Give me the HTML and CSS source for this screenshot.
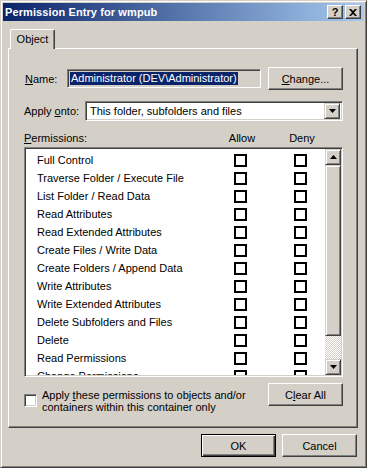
FILE: index.html
```html
<!DOCTYPE html>
<html lang="en">
<head>
    <meta charset="UTF-8">
    <title>Permission Entry for wmpub</title>
    <link rel="stylesheet" href="styles.css">
</head>
<body>
    <div class="window">
        <div class="titlebar">
            <span class="title">Permission Entry for wmpub</span>
            <div class="caption-buttons">
                <div class="cap-btn help">?</div>
                <div class="cap-btn">
                    <svg width="8" height="7" viewBox="0 0 8 7"><path d="M0 0h2l2 2 2-2h2L5 3.5 8 7H6L4 5 2 7H0l3-3.5z" fill="#000"/></svg>
                </div>
            </div>
        </div>

        <div class="client">
            <div class="tabs">
                <div class="tab active">Object</div>
            </div>

            <div class="panel">
                <div class="row name-row">
                    <label class="lbl name-lbl"><u>N</u>ame:</label>
                    <div class="field readonly"><span class="selected">Administrator (DEV\Administrator)</span></div>
                    <button class="btn"><u>C</u>hange...</button>
                </div>

                <div class="row apply-row">
                    <label class="lbl apply-lbl">Apply <u>o</u>nto:</label>
                    <div class="field combo">
                        <span class="combo-text">This folder, subfolders and files</span>
                        <div class="arrow-btn">
                            <svg width="7" height="4" viewBox="0 0 7 4"><path d="M0 0h7L3.5 4z" fill="#000"/></svg>
                        </div>
                    </div>
                </div>

                <div class="perm-header">
                    <span class="perm-lbl"><u>P</u>ermissions:</span>
                    <span class="col-allow">Allow</span>
                    <span class="col-deny">Deny</span>
                </div>

                <div class="listbox">
                    <div class="rows" id="perm-rows"></div>
                    <div class="scrollbar">
                        <div class="arrow-btn">
                            <svg width="7" height="4" viewBox="0 0 7 4"><path d="M3.5 0L7 4H0z" fill="#000"/></svg>
                        </div>
                        <div class="thumb"></div>
                        <div class="track"></div>
                        <div class="arrow-btn">
                            <svg width="7" height="4" viewBox="0 0 7 4"><path d="M0 0h7L3.5 4z" fill="#000"/></svg>
                        </div>
                    </div>
                </div>

                <div class="row bottom-row">
                    <div class="check"></div>
                    <div class="check-text">Apply <u>t</u>hese permissions to objects and/or<br>containers within this container only</div>
                    <button class="btn">C<u>l</u>ear All</button>
                </div>
            </div>

            <div class="footer">
                <button class="btn default">OK</button>
                <button class="btn">Cancel</button>
            </div>
        </div>
    </div>

    <script>
        const perms = [
            'Full Control',
            'Traverse Folder / Execute File',
            'List Folder / Read Data',
            'Read Attributes',
            'Read Extended Attributes',
            'Create Files / Write Data',
            'Create Folders / Append Data',
            'Write Attributes',
            'Write Extended Attributes',
            'Delete Subfolders and Files',
            'Delete',
            'Read Permissions',
            'Change Permissions',
            'Take Ownership'
        ];
        const rows = document.getElementById('perm-rows');
        perms.forEach(name => {
            const row = document.createElement('div');
            row.className = 'perm-row';
            row.innerHTML = `
                <span class="perm-name">${name}</span>
                <span class="box"></span>
                <span></span>
                <span class="box"></span>
            `;
            rows.appendChild(row);
        });
    </script>
</body>
</html>
```

FILE: styles.css
```css
* {
    margin: 0;
    padding: 0;
    box-sizing: border-box;
}

body {
    font-family: 'Liberation Sans', Arial, sans-serif;
    font-size: 11px;
    color: #000;
    background: #d4d0c8;
}

u {
    text-decoration: underline;
    text-underline-offset: 1px;
}

.window {
    width: 367px;
    height: 468px;
    background: #d4d0c8;
    border: 1px solid;
    border-color: #d4d0c8 #404040 #404040 #d4d0c8;
    box-shadow: inset 1px 1px #fff, inset -1px -1px #808080;
    padding: 2px;
}

/* title bar */
.titlebar {
    height: 18px;
    display: flex;
    align-items: center;
    justify-content: space-between;
    padding: 0 3px 0 2px;
    background: linear-gradient(to right, #0a246a, #a6caf0);
}

.title {
    color: #fff;
    font-weight: bold;
    font-size: 11px;
    letter-spacing: 0.1px;
}

.caption-buttons {
    display: flex;
    gap: 2px;
}

.cap-btn {
    width: 16px;
    height: 14px;
    display: flex;
    align-items: center;
    justify-content: center;
    background: #d4d0c8;
    border: 1px solid;
    border-color: #fff #404040 #404040 #fff;
    box-shadow: inset -1px -1px #808080;
}

.cap-btn.help {
    font-weight: bold;
    font-size: 11px;
    line-height: 12px;
}

/* tabs */
.tabs {
    display: flex;
    height: 19px;
    margin-top: 8px;
    padding-left: 7px;
}

.tab {
    position: relative;
    z-index: 1;
    width: 45px;
    height: 20px;
    padding-top: 3px;
    text-align: center;
    background: #d4d0c8;
    border: 1px solid;
    border-bottom: none;
    border-color: #fff #404040 #d4d0c8 #fff;
    border-radius: 2px 2px 0 0;
    box-shadow: inset -1px 0 #808080;
}

.panel {
    margin-left: 5px;
    width: 350px;
    height: 380px;
    border: 1px solid;
    border-color: #fff #404040 #404040 #fff;
    box-shadow: inset -1px -1px #808080;
    padding: 18px 14px 0 15px;
}

.row {
    display: flex;
    align-items: center;
}

.lbl {
    white-space: nowrap;
}

.name-lbl {
    width: 43px;
    padding-left: 1px;
}

.apply-lbl {
    width: 61px;
}

.field {
    background: #fff;
    border: 1px solid;
    border-color: #808080 #fff #fff #808080;
    box-shadow: inset 1px 1px #404040, inset -1px -1px #d4d0c8;
}

.field.readonly {
    width: 194px;
    height: 19px;
    padding: 2px 0 0 2px;
    background: #d4d0c8;
}

.selected {
    display: inline-block;
    background: #0a246a;
    color: #fff;
    line-height: 13px;
    padding: 0 1px;
}

.btn {
    width: 75px;
    height: 23px;
    margin-left: auto;
    font-family: inherit;
    font-size: 11px;
    color: #000;
    background: #d4d0c8;
    border: 1px solid;
    border-color: #fff #404040 #404040 #fff;
    box-shadow: inset -1px -1px #808080, inset 1px 1px #d4d0c8;
}

.btn.default {
    border-color: #000;
    box-shadow: inset 1px 1px #fff, inset -1px -1px #404040, inset -2px -2px #808080;
}

.apply-row {
    margin-top: 11px;
}

.field.combo {
    width: 258px;
    height: 20px;
    display: flex;
    align-items: center;
    padding: 2px;
}

.combo-text {
    flex: 1;
    padding-left: 2px;
}

.arrow-btn {
    width: 16px;
    height: 16px;
    display: flex;
    align-items: center;
    justify-content: center;
    background: #d4d0c8;
    border: 1px solid;
    border-color: #d4d0c8 #404040 #404040 #d4d0c8;
    box-shadow: inset 1px 1px #fff, inset -1px -1px #808080;
}

/* permissions list */
.perm-header {
    display: flex;
    height: 16px;
    margin-top: 10px;
    line-height: 14px;
}

.perm-lbl {
    width: 203px;
}

.col-allow {
    width: 30px;
    text-align: center;
}

.col-deny {
    width: 30px;
    margin-left: 30px;
    text-align: center;
}

.listbox {
    display: flex;
    width: 319px;
    height: 230px;
    background: #fff;
    border: 1px solid;
    border-color: #808080 #fff #fff #808080;
    box-shadow: inset 1px 1px #404040, inset -1px -1px #d4d0c8;
    padding: 1px;
}

.rows {
    flex: 1;
    overflow: hidden;
    padding-top: 2px;
}

.perm-row {
    display: grid;
    grid-template-columns: 208px 13px 47px 13px;
    align-items: center;
    height: 18px;
}

.perm-name {
    padding-left: 11px;
    white-space: nowrap;
}

.box {
    width: 13px;
    height: 13px;
    border: 2px solid #000;
    background: #fff;
}

.scrollbar {
    width: 16px;
    display: flex;
    flex-direction: column;
}

.thumb {
    height: 171px;
    background: #d4d0c8;
    border: 1px solid;
    border-color: #d4d0c8 #404040 #404040 #d4d0c8;
    box-shadow: inset 1px 1px #fff, inset -1px -1px #808080;
}

.track {
    flex: 1;
    background: repeating-conic-gradient(#fff 0 25%, #d4d0c8 0 50%) 0 0 / 2px 2px;
}

/* bottom option */
.bottom-row {
    margin-top: 6px;
    align-items: flex-start;
}

.check {
    width: 13px;
    height: 13px;
    margin-top: 11px;
    background: #fff;
    border: 1px solid;
    border-color: #808080 #fff #fff #808080;
    box-shadow: inset 1px 1px #404040, inset -1px -1px #d4d0c8;
}

.check-text {
    margin: 6px 0 0 5px;
    line-height: 12px;
    white-space: nowrap;
}

.footer {
    display: flex;
    justify-content: flex-end;
    gap: 6px;
    margin-top: 6px;
    padding-right: 7px;
}

.footer .btn {
    margin-left: 0;
}
```
